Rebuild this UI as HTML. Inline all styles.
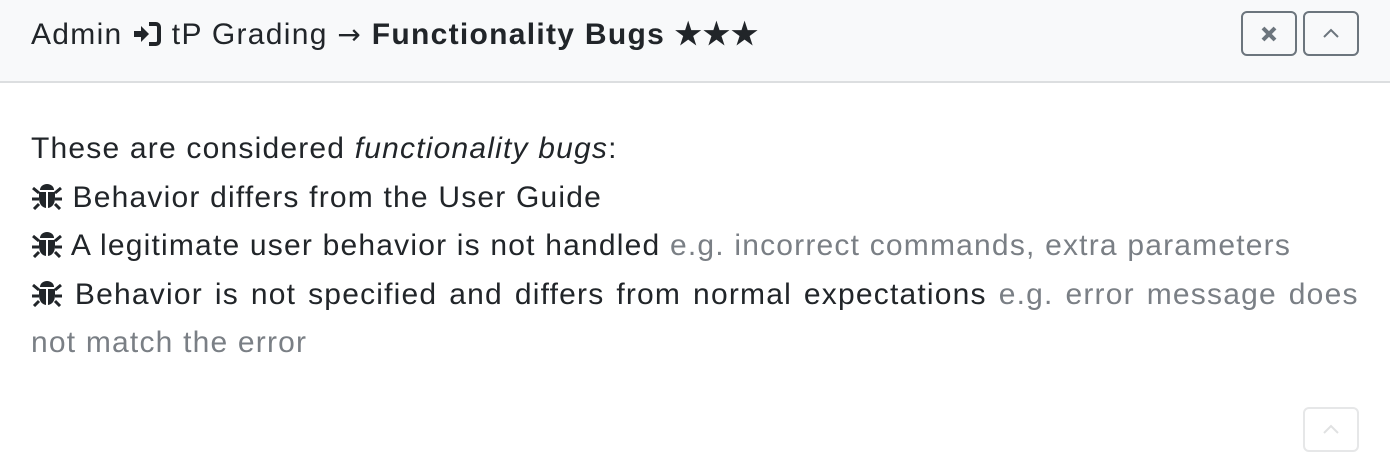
<!DOCTYPE html>
<html><head><meta charset="utf-8"><style>
body{margin:0;width:1390px;height:472px;background:#fff;font-family:"Liberation Sans",sans-serif;color:#212529;overflow:hidden;position:relative}
.hd{position:absolute;left:0;top:0;width:1390px;height:81px;background:#f8f9fa;border-bottom:2px solid #dcdee0}
.title{position:absolute;left:31px;top:14px;font-size:30px;letter-spacing:1.3px;line-height:42px;white-space:nowrap}
.btn{position:absolute;width:52px;height:41px;border:2px solid #6c757d;border-radius:6px;box-sizing:content-box}
.btn svg{position:absolute;left:16px;top:11px}
.body{position:absolute;left:31px;top:125px;width:1340px;font-size:30px;letter-spacing:1.2px;line-height:48.5px}
.ln{white-space:nowrap;display:block}
.m{color:#7a7f85}
.bug{display:inline-block;width:32px;vertical-align:-3px}
</style></head><body>
<div class="hd">
<div class="title">Admin <svg width="30" height="26" viewBox="0 0 30 26" style="vertical-align:-3px"><path d="M2 10h7V5l8 8-8 8v-5H2z" fill="#212529"/><path d="M17 3h7a3 3 0 0 1 3 3v14a3 3 0 0 1-3 3h-7" fill="none" stroke="#212529" stroke-width="4"/></svg> tP Grading <span style="font-family:'DejaVu Sans',sans-serif;font-size:28px">→</span> <b>Functionality Bugs ★★★</b></div>
<div class="btn" style="left:1241px;top:11px"><svg width="20" height="20" viewBox="0 0 20 20"><path d="M4 4l12 12M16 4L4 16" stroke="#6c757d" stroke-width="4"/></svg></div>
<div class="btn" style="left:1303px;top:11px"><svg width="20" height="20" viewBox="0 0 20 20"><path d="M3 13l7-7 7 7" fill="none" stroke="#6c757d" stroke-width="2"/></svg></div>
</div>
<div class="body">
<span class="ln">These are considered <i>functionality bugs</i>:</span>
<span class="ln"><svg class="bug" width="32" height="28" viewBox="0 0 32 28"><path d="M9 8a7 6 0 0 1 14 0z" fill="#212529"/><path d="M8 10h16v6c0 6-3 10-8 10s-8-4-8-10z" fill="#212529"/><path d="M15 10h2v16h-2z" fill="#fff"/><path d="M2 6l6 5M30 6l-6 5M1 17h7M31 17h-7M3 27l5-5M29 27l-5-5" stroke="#212529" stroke-width="3"/></svg> Behavior differs from the User Guide</span>
<span class="ln"><svg class="bug" width="32" height="28" viewBox="0 0 32 28"><path d="M9 8a7 6 0 0 1 14 0z" fill="#212529"/><path d="M8 10h16v6c0 6-3 10-8 10s-8-4-8-10z" fill="#212529"/><path d="M15 10h2v16h-2z" fill="#fff"/><path d="M2 6l6 5M30 6l-6 5M1 17h7M31 17h-7M3 27l5-5M29 27l-5-5" stroke="#212529" stroke-width="3"/></svg> A legitimate user behavior is not handled <span class="m">e.g. incorrect commands, extra parameters</span></span>
<span class="ln" style="word-spacing:2.4px"><svg class="bug" width="32" height="28" viewBox="0 0 32 28"><path d="M9 8a7 6 0 0 1 14 0z" fill="#212529"/><path d="M8 10h16v6c0 6-3 10-8 10s-8-4-8-10z" fill="#212529"/><path d="M15 10h2v16h-2z" fill="#fff"/><path d="M2 6l6 5M30 6l-6 5M1 17h7M31 17h-7M3 27l5-5M29 27l-5-5" stroke="#212529" stroke-width="3"/></svg> Behavior is not specified and differs from normal expectations <span class="m">e.g. error message does</span></span>
<span class="ln m">not match the error</span>
</div>
<div class="btn" style="left:1303px;top:407px;border-color:#e6e7e8"><svg width="20" height="20" viewBox="0 0 20 20"><path d="M3 13l7-7 7 7" fill="none" stroke="#e0e1e2" stroke-width="2"/></svg></div>
</body></html>
